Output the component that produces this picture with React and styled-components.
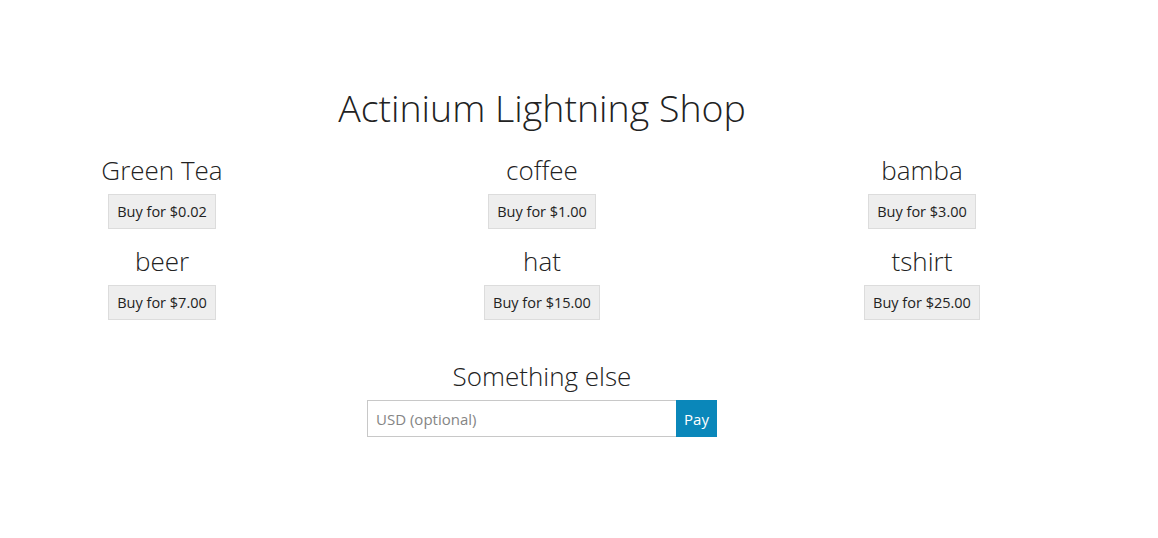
import React from "react";
import styled, { createGlobalStyle } from "styled-components";

const GlobalStyle = createGlobalStyle`
  body {
    margin: 0;
    background: #fff;
    color: #222;
    font-family: "Open Sans", "Noto Sans", sans-serif;
  }
`;

const products = [
  { name: "Green Tea", price: "0.02" },
  { name: "coffee", price: "1.00" },
  { name: "bamba", price: "3.00" },
  { name: "beer", price: "7.00" },
  { name: "hat", price: "15.00" },
  { name: "tshirt", price: "25.00" },
];

const Page = styled.div`
  width: 1084px;
  padding-top: 87px;
  text-align: center;
`;

const Title = styled.h1`
  margin: 0 0 27px;
  font-size: 37.5px;
  line-height: 41px;
  font-weight: 300;
`;

const Grid = styled.div`
  display: grid;
  grid-template-columns: 324px 436px 324px;
  row-gap: 17px;
`;

const Item = styled.div`
  display: flex;
  flex-direction: column;
  align-items: center;
`;

const Name = styled.h3`
  margin: 0 0 9px;
  padding-top: 1px;
  font-size: 26px;
  line-height: 29px;
  font-weight: 300;
`;

const BuyButton = styled.button`
  font-family: inherit;
  font-size: 14.5px;
  line-height: 21px;
  padding: 6px 8px;
  color: #222;
  background: #eeeeee;
  border: 1px solid #dcdcdc;
  border-radius: 0;
  cursor: pointer;
`;

const Other = styled.div`
  margin-top: 41px;
  display: flex;
  flex-direction: column;
  align-items: center;
`;

const PayForm = styled.form`
  display: flex;
  width: 350px;
  height: 37px;
`;

const AmountInput = styled.input`
  flex: 1;
  min-width: 0;
  box-sizing: border-box;
  height: 100%;
  padding: 0 8px;
  font-family: inherit;
  font-size: 15px;
  color: #222;
  border: 1px solid #c8c8c8;
  border-right: none;
  outline: none;
  &::placeholder {
    color: #858585;
  }
`;

const PayButton = styled.button`
  width: 41px;
  height: 100%;
  padding: 0;
  font-family: inherit;
  font-size: 15px;
  color: #fff;
  background: #0a87ba;
  border: none;
  border-radius: 0;
  cursor: pointer;
`;

export default function App() {
  return (
    <>
      <GlobalStyle />
      <Page>
        <Title>Actinium Lightning Shop</Title>
        <Grid>
          {products.map((p) => (
            <Item key={p.name}>
              <Name>{p.name}</Name>
              <BuyButton type="button">Buy for ${p.price}</BuyButton>
            </Item>
          ))}
        </Grid>
        <Other>
          <Name>Something else</Name>
          <PayForm onSubmit={(e) => e.preventDefault()}>
            <AmountInput placeholder="USD (optional)" />
            <PayButton type="submit">Pay</PayButton>
          </PayForm>
        </Other>
      </Page>
    </>
  );
}
